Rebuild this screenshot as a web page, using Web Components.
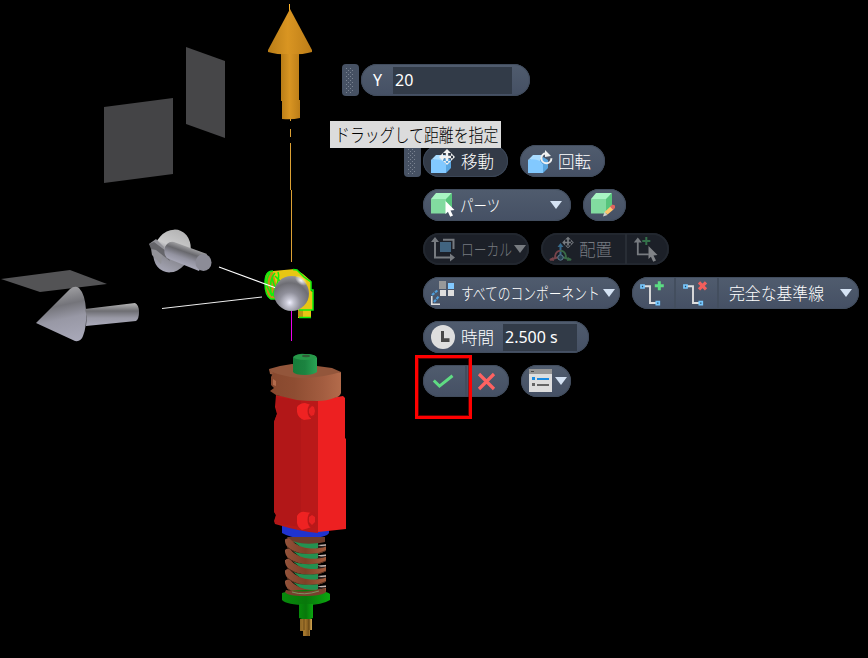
<!DOCTYPE html>
<html lang="ja">
<head>
<meta charset="utf-8">
<title>コンポーネントを移動</title>
<style>
html,body{margin:0;height:100%;background:#000;overflow:hidden}
</style>
</head>
<body>
<cad-workspace></cad-workspace>
<script>
const define=(name,html,init)=>customElements.define(name,class extends HTMLElement{
  constructor(){super();this.attachShadow({mode:'open'}).innerHTML=html;}
  connectedCallback(){if(init)init(this,this.shadowRoot);}
});

const cube=(a,b,c)=>`<path fill="${b}" d="M8 10h15v14.5H8z"/><path fill="${a}" d="M8 10l5-6h16l-5 6z"/><path fill="${c}" d="M23 10l6-6v15l-6 5.5z"/>`;
const blueCube='<path fill="#82c9ff" d="M8 15q7-3 12 0l3 4v9H8z"/><path fill="#a9dcff" d="M8 15l5-5h10l-3 6q-6-3-12-1z"/><path fill="#5aa6e0" d="M20 16l3-4 5 3v8l-5 5v-9z"/>';
const move=(x,y,r,c)=>`<g transform="translate(${x} ${y}) scale(${r/8})" fill="${c}"><path d="M-1.2-6h2.4V6h-2.4zM-6-1.2H6v2.4H-6zM0-8l4 4h-8zM0 8l4-4h-8zM-8 0l4-4v8zM8 0l-4-4v8z"/></g>`;
const cursor=(x,y,c)=>`<path transform="translate(${x} ${y})" fill="${c}" d="M0 0l9 9-4 .6 2.5 5-2.8 1.2-2.3-5L0 13z"/>`;
const baseline='<path d="M12 9.3h6V26h6" fill="none" stroke="#dedede" stroke-width="1.9"/><path d="M9 8h3v3H9zM24.3 24.7h3v3h-3z" fill="#29455c" stroke="#76c8ff" stroke-width="1.7"/>';
const icons={
  move:blueCube+move(24,12,8,'#f1f1f1'),
  rotate:blueCube+'<path d="M26 8.2a5 5 0 1 0 5.4 5" fill="none" stroke="#f0f0f0" stroke-width="2"/><path fill="#f0f0f0" d="M25 5v7l6-1z"/>',
  part:cube('#a8f5c3','#82dba0','#58c47c')+cursor(22.5,12,'#fff'),
  edit:cube('#a8f5c3','#82dba0','#58c47c')+'<path fill="#ffc66d" d="M21.5 23l6-5.5 3 3-6 5z"/><path fill="#e0655f" d="M27 17.5l2.5-2 2.5 1v2.5l-2 1.8z"/><path fill="#d4d0c9" d="M21.5 23l3 3-4.5 1.5z"/>',
  local:'<path d="M12 8v16.5h16M20 6.8h10.5V16" fill="none" stroke="#777b80" stroke-width="2"/><path fill="#777b80" d="M12 4l4 5H8zM32 24.5l-5-4v8z"/><path fill="#416480" d="M17 9h11v10H17z"/>',
  place:'<path d="M19.5 25V12" stroke="#36698b" stroke-width="2"/><path fill="#36698b" d="M19.5 10l3 4h-6z"/><path d="M14 25c0-8 5-7 5.5-7" fill="none" stroke="#76434a" stroke-width="1.8"/><path d="M25 25c0-8-5-7-5.5-7" fill="none" stroke="#396a47" stroke-width="1.8"/><path d="M18 24l-9 2.7" stroke="#76434a" stroke-width="2"/><path d="M21 24l9 2.7" stroke="#396a47" stroke-width="2"/><path fill="#76434a" d="M8 27l4-3 1 4z"/><path fill="#396a47" d="M31 27l-4-3-1 4z"/><circle cx="19.5" cy="24.5" r="2.7" fill="#263f50" stroke="#5f7d91"/>'+move(27,9.5,5.8,'#777b80'),
  pick:'<path d="M10.8 8v13.3h11" fill="none" stroke="#777b80" stroke-width="1.8"/><path fill="#777b80" d="M10.8 4.5l4 5h-8z"/><path d="M19.3 4v8M15.3 8h8" stroke="#34714a" stroke-width="2"/>'+cursor(21.5,13,'#808387'),
  all:'<path fill="#999" d="M16 4h7v8h-7z"/><path fill="#82c9ff" d="M25 6h6v6h-6z"/><path fill="#dedede" d="M17 13h6v6h-6zM25 13h6v6h-6z"/><path d="M8.8 19v8.2H17" fill="none" stroke="#dedede" stroke-width="1.6"/><path d="M9 18l6-5M11 25l5-6" stroke="#4f9edb" stroke-width="2.2" stroke-dasharray="3 1"/>',
  time:'<circle cx="20" cy="16" r="12" fill="#dedede"/><path fill="#484848" d="M18 10h3v7.3h5.5V21H18z"/>',
  check:'<path d="M10.8 15.5l5.7 5.6L29.5 10.8" fill="none" stroke="#5fdb83" stroke-width="3"/>',
  cancel:'<path d="M14 9l15 15M29 9L14 24" stroke="#ff6261" stroke-width="3.2"/>',
  list:'<path fill="#dedede" d="M8 4h23v23H8z"/><path fill="#979797" d="M8 4h23v5H8z"/><path fill="#4c4c4c" d="M10 6h3v1h-3z"/><path fill="#1b8be0" d="M11 12h3v3h-3zM16 13h12v2H16z"/><path fill="#666" d="M11 18h3v3h-3zM16 19h12v2H16z"/>',
  add:baseline+'<path d="M27.3 4.3v9M22.8 8.8h9" stroke="#5bdc83" stroke-width="3"/>',
  del:baseline+'<path d="M24 5.3l7 7M31 5.3l-7 7" stroke="#f25f5c" stroke-width="3.2"/>'
};

define('tool-icon','<style>:host{display:block;flex:none;height:32px}svg{display:block}</style><svg height="32"></svg>',(e,s)=>{
  const w=e.getAttribute('w'),v=s.querySelector('svg');v.setAttribute('width',w);v.innerHTML=icons[e.getAttribute('name')];
});

/* Text scaled horizontally to the width given by "w". */
define('fit-label',`<style>
:host{display:block;flex:none;white-space:nowrap}
span{display:inline-block;transform-origin:0 50%}
</style><span><slot></slot></span>`,(e,s)=>{
  const w=+e.getAttribute('w'),t=s.querySelector('span');e.style.width=w+'px';
  requestAnimationFrame(()=>{t.style.transform=`scaleX(${w/t.offsetWidth})`;});
});

define('tool-pill',`<style>
:host{display:flex;align-items:center;box-sizing:border-box;height:32px;flex:none;border-radius:16px;overflow:hidden;
background:linear-gradient(#505c6e,#455064);box-shadow:inset 0 0 0 1px #414c5d;color:#fff;font:300 16.5px/31px "Noto Sans CJK JP",sans-serif}
:host([active]){background:#323a47;box-shadow:inset 0 0 0 1px #3b4656}
:host([disabled]){background:#1c2028;box-shadow:inset 0 0 0 2px #22272f;color:#777b80}
</style><slot></slot>`,e=>{e.style.width=e.getAttribute('w')+'px';});

define('tool-caret',`<style>:host{display:block;flex:none;margin-left:auto;width:12px;height:8px;background:#d5e3f4;clip-path:polygon(0 0,100% 0,50% 100%)}
:host([dim]){background:#777b80}</style>`);
define('tool-divider','<style>:host{display:block;flex:none;width:2px;height:30px;background:#434e5e}:host([dim]){background:#282d35}</style>');
define('tool-field',`<style>:host{display:block;flex:none;box-sizing:border-box;height:27px;padding-left:2px;background:#323b48;color:#fff;font:400 16px/27px "Noto Sans",sans-serif;white-space:pre}</style><slot></slot>`,
  e=>{e.style.width=e.getAttribute('w')+'px';});
define('tool-grip',`<style>:host{display:block;flex:none;width:17px;height:32px;border-radius:4px;background:#465163}svg{display:block}</style>
<svg width="17" height="32"><defs><pattern id="p" width="4" height="4" patternUnits="userSpaceOnUse"><path fill="#7b8492" d="M0 0h1v1H0zM2 2h1v1H2z"/></pattern></defs><path fill="url(#p)" d="M4 3h7v26H4z"/></svg>`);

define('value-bar',`<style>
:host{display:flex;gap:2px}
span{display:block;width:32px;padding-left:12px;box-sizing:border-box;font:400 16px/32px "Noto Sans",sans-serif}
</style><tool-grip></tool-grip><tool-pill w="169"><span>Y</span><tool-field w="119">20</tool-field></tool-pill>`);

define('drag-tip',`<style>:host{display:block;box-sizing:border-box;width:171px;height:27px;padding-left:5px;background:#dcdcdc;color:#000;font:300 18px/27px "Noto Sans CJK JP",sans-serif}</style><fit-label w="163">ドラッグして距離を指定</fit-label>`);

define('move-panel',`<style>
:host{display:flex;gap:2px}
.rows{display:grid;gap:12px}
.row{display:flex;gap:12px}
</style><tool-grip></tool-grip>
<div class="rows">
<div class="row"><tool-pill active w="85"><tool-icon name="move" w="38"></tool-icon><fit-label w="33">移動</fit-label></tool-pill>
<tool-pill w="85"><tool-icon name="rotate" w="38"></tool-icon><fit-label w="33">回転</fit-label></tool-pill></div>
<div class="row"><tool-pill w="148"><tool-icon name="part" w="37"></tool-icon><fit-label w="40">パーツ</fit-label><tool-caret style="margin-right:9px"></tool-caret></tool-pill>
<tool-pill w="43"><tool-icon name="edit" w="43"></tool-icon></tool-pill></div>
<div class="row"><tool-pill disabled w="106"><tool-icon name="local" w="38"></tool-icon><fit-label w="51">ローカル</fit-label><tool-caret dim style="margin-right:3px"></tool-caret></tool-pill>
<tool-pill disabled w="128"><tool-icon name="place" w="38"></tool-icon><fit-label w="33">配置</fit-label><tool-divider dim style="margin-left:13px"></tool-divider><tool-icon name="pick" w="42"></tool-icon></tool-pill></div>
<div class="row"><tool-pill w="197"><tool-icon name="all" w="38"></tool-icon><fit-label w="139">すべてのコンポーネント</fit-label><tool-caret style="margin-right:5px"></tool-caret></tool-pill>
<tool-pill w="227"><tool-icon name="add" w="42"></tool-icon><tool-divider></tool-divider><tool-icon name="del" w="42" style="margin-left:-1px"></tool-icon><tool-divider></tool-divider><fit-label w="95" style="margin-left:10px">完全な基準線</fit-label><tool-caret style="margin-right:7px"></tool-caret></tool-pill></div>
<div class="row"><tool-pill w="166"><tool-icon name="time" w="38"></tool-icon><fit-label w="33">時間</fit-label><tool-field w="74" style="margin-left:9px">2.500 s</tool-field></tool-pill></div>
<div class="row"><tool-pill w="86"><tool-icon name="check" w="42"></tool-icon><tool-divider></tool-divider><tool-icon name="cancel" w="42" style="margin-left:-2px"></tool-icon></tool-pill>
<tool-pill w="50"><tool-icon name="list" w="33"></tool-icon><tool-caret style="margin-right:4px"></tool-caret></tool-pill></div>
</div>`);

const coils=[0,10.3,20.6,30.9,41.2].map(y=>`<g transform="translate(0 ${y})">
<path fill="#2b211e" d="M308 546q12 0 18-2v6l-16 3z"/><path fill="#c7b8b4" d="M317 545l9-.7v1.5l-5 .3zM285 540l1.500-1v5z"/>
<path fill="#239150" d="M293 541q10 4 25 2v5q-6 4-14 2z"/>
<path fill="url(#spring)" d="M285 540q2-3 5-1 8 9 21 9.500 10 0 15-2v4q-6 4-15 4-13 0-22-6-4-3-4-8.500z"/>
<path d="M287 547q9 7.500 22 7.500 10 0 17-4" fill="none" stroke="#57301f"/></g>`).join('');

define('model-scene',`<style>:host,svg{display:block}</style>
<svg width="868" height="658" viewBox="0 0 868 658"><defs>
<linearGradient id="gold"><stop stop-color="#b97d17"/><stop offset=".45" stop-color="#d99522"/><stop offset="1" stop-color="#bc7d18"/></linearGradient>
<linearGradient id="cone" x1=".4" y1="0" x2=".6" y2="1"><stop offset=".05" stop-color="#a0a0a3"/><stop offset=".35" stop-color="#74747a"/><stop offset=".6" stop-color="#9898a5"/><stop offset="1" stop-color="#a7a7b7"/></linearGradient>
<linearGradient id="rod" x2="0" y2="1"><stop stop-color="#b8b8b8"/><stop offset=".35" stop-color="#6e6e73"/><stop offset=".65" stop-color="#9999a5"/><stop offset="1" stop-color="#aaaaba"/></linearGradient>
<linearGradient id="rod2" gradientUnits="userSpaceOnUse" x1="190" y1="247" x2="184" y2="264"><stop stop-color="#a5a5a7"/><stop offset=".35" stop-color="#68686d"/><stop offset=".7" stop-color="#9393a0"/><stop offset="1" stop-color="#a5a5b4"/></linearGradient>
<linearGradient id="disc" x2="0" y2="1"><stop stop-color="#b4b4b4"/><stop offset=".4" stop-color="#cbcbcc"/><stop offset=".6" stop-color="#85858c"/><stop offset="1" stop-color="#a5a5b4"/></linearGradient>
<radialGradient id="ball" cx=".45" cy=".76" r=".75"><stop stop-color="#f0f0ff"/><stop offset=".15" stop-color="#c5c5d2"/><stop offset=".4" stop-color="#90909b"/><stop offset=".75" stop-color="#6e6e74"/><stop offset="1" stop-color="#939398"/></radialGradient>
<radialGradient id="shine"><stop stop-color="#fff"/><stop offset="1" stop-color="#fff" stop-opacity="0"/></radialGradient>
<linearGradient id="brown"><stop stop-color="#87482e"/><stop offset=".35" stop-color="#8e4d32"/><stop offset=".75" stop-color="#a35d40"/><stop offset="1" stop-color="#b36b4b"/></linearGradient>
<linearGradient id="spring"><stop stop-color="#92523a"/><stop offset=".5" stop-color="#804027"/><stop offset="1" stop-color="#a45b3c"/></linearGradient>
<linearGradient id="green"><stop stop-color="#167c39"/><stop offset=".5" stop-color="#1c8340"/><stop offset="1" stop-color="#2aa455"/></linearGradient>
<linearGradient id="base"><stop stop-color="#078b0b"/><stop offset=".5" stop-color="#08780b"/><stop offset="1" stop-color="#0ba60f"/></linearGradient>
<linearGradient id="brass"><stop stop-color="#8b6525"/><stop offset=".4" stop-color="#a7782d"/><stop offset=".7" stop-color="#7c561c"/><stop offset="1" stop-color="#d5a852"/></linearGradient>
</defs>
<path fill="#444446" d="M104 107l69-9v76l-69 9z"/><path fill="#464648" d="M186 47l39 14v77l-39-14z"/><path fill="#535355" d="M1 279l69-9 37 14-67 8z"/>
<path d="M290.5 118v3M290.500 129v8M290.500 143v47M291.500 190v72" stroke="#dca034"/><path d="M289.500 4v8" stroke="#ffb52c"/>
<path fill="url(#gold)" d="M290 9l22 41v2q-8 2.500-22 2.500t-22-2.500v-2z"/>
<path fill="url(#gold)" d="M281 54h18v46h1v18q-8 2-18 1v-18h-1z"/>
<path fill="url(#cone)" d="M36 323l34-34q5-4 9-1 6 6 7 22 1 16-3 26-2 6-8 5z"/>
<path fill="url(#rod)" d="M85 309l50-6q4 2 4 9 0 7-3 9l-50 5q1-10-1-17z"/>
<ellipse cx="172" cy="251" rx="18" ry="22" transform="rotate(24 172 251)" fill="url(#disc)"/>
<path fill="#929298" d="M149 244l7-5 8 8-3 17-9-9q-1-5-1-9z"/><path fill="#65656a" d="M149 244l5-2 12 9 4 10-14-11-5-1z"/>
<path fill="url(#rod2)" d="M165 255q-2-7 2-11 3-3 7-2l33 12-8 17-30-12q-3-1-4-4z"/>
<ellipse cx="203.500" cy="262.500" rx="8" ry="8.500" fill="#8c8c97"/>
<path d="M162 308.500l100-11.500" stroke="#eee"/>
<path fill="#c49512" d="M265 280q0-8 6-9h8v8l-4 20h-5q-6-6-5-19z"/>
<path fill="#e8c613" d="M273 271l22-2 8 5 8 7v10l2 1v18h-2v8h-13v-10l-20-16z"/><path fill="#bd9710" d="M298 310h5v7h-5z"/>
<path d="M273 271q-8 0-8 12 0 13 6 16h5M270 273q-4 5-3 13l5 10M275 273q-6 6-4 20l5 5M278 272q2 5-2 15l-3 8M275 276l5 5-4 14M272 278l3 10-2 6M293 269.500l4 .5 7 7 7 5v8h2v20h-14M299 317.500h12" fill="none" stroke="#0fef0d" stroke-width="1.5"/>
<path d="M291.500 310v31" stroke="#ec00ec"/>
<path d="M219 267l57 21" stroke="#fff" stroke-width="1.2"/>
<circle cx="291.500" cy="293.500" r="17.500" fill="url(#ball)"/><ellipse cx="301" cy="280.500" rx="7" ry="4" transform="rotate(38 301 280.500)" fill="url(#shine)" opacity=".95"/>
<path fill="#2033cf" d="M282 526v7q10 6 25 5 19 0 22-5v-9z"/>
<path fill="#6d3c2a" d="M287 537h38v5l-15 3-20-3z"/>
${coils}
<path fill="url(#base)" d="M282 593q7-3 24-3 19 0 24 4v6q-8 5-24 5-19 0-24-5z"/><path fill="#78412d" d="M286 590q22 4 39-2l1 4q-4 4-22 4-17 0-19-4z"/><path d="M292 592q12 4 27-1" stroke="#7b9361" fill="none"/>
<path fill="url(#base)" d="M299 604h14v14q-6 3-14 0z"/><path fill="url(#brass)" d="M300 619h12v11h-2v6h-7v-5h-3z"/><path d="M304 619v11M309 619v11" stroke="#674717"/>
<path fill="#b91919" d="M276 395l26 4 16 2v132q-16-1-43-9l-1-3 2-6-2-3V422l3-8-2-7z"/>
<path fill="#b21718" d="M276 397l25 4v126l-26-4 1-8-2-4V422l3-8z"/>
<path fill="#ed2021" d="M318 400l25-4 2 2v40l1 1v90l-28 3z"/>
<path fill="#ef2222" d="M297 407q3-4 8-4l6 2v14l-7 1q-6-2-7-8z"/><ellipse cx="312" cy="411" rx="4.500" ry="7.500" fill="#bb1819"/><path fill="#e62122" d="M309 409l3-3 2 1 1 4-1 4-3 1-2-3z"/>
<path fill="#ef2222" d="M297 516q3-5 8-4l7 1v14l-10 3q-6-4-5-10z"/><ellipse cx="312" cy="520" rx="4.500" ry="8" fill="#b91819"/><path fill="#e62122" d="M309 517l3-2 3 2v5l-3 3-3-3z"/>
<path fill="#93563b" d="M269 369l11-3 12-2 25 2 15 2 9 4-8 4-21 4h-17l-25-6z"/><path fill="url(#brown)" d="M269 370q4 3 13 5 13 4 25 3 17-1 34-6v21q-1 4-7 5-7 3-17 3-11 0-20-1l-21-5-6-4 4-3-3-3v-8l2-4-3-3z"/>
<path fill="#b36b4c" d="M273 379l3 2v5l-3-1z"/>
<path fill="url(#green)" d="M293 357q5-4 12-3 11 0 12 4v14q-4 3-12 3-10 0-12-3z"/><ellipse cx="305" cy="357" rx="11.500" ry="3" fill="#279849"/><ellipse cx="306" cy="356" rx="4" ry="1.200" fill="#315b37"/>
</svg>`);

define('cad-workspace',`<style>
:host{display:block;position:relative;width:868px;height:658px;background:#000;overflow:hidden}
value-bar,move-panel,drag-tip,.mark{position:absolute}
value-bar{left:342px;top:64px}move-panel{left:404px;top:145px}drag-tip{left:330px;top:121px}
.mark{left:415px;top:355px;width:57px;height:64px;box-sizing:border-box;border:3px solid #f00;box-shadow:inset 0 0 0 1px #9009}
</style><model-scene></model-scene><value-bar></value-bar><move-panel></move-panel><drag-tip></drag-tip><div class="mark"></div>`);
</script>
</body>
</html>
